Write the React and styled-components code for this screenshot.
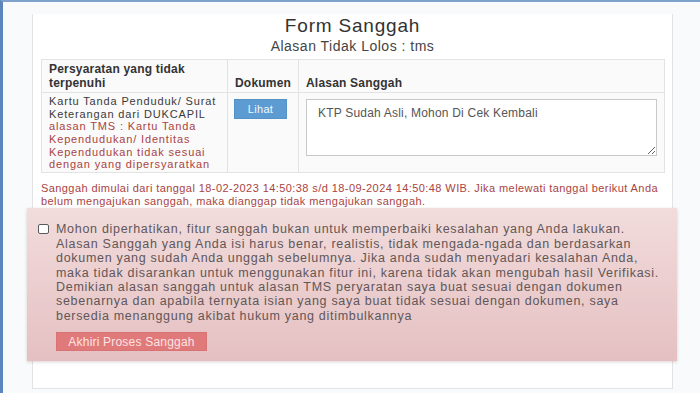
import React from "react";
import styled, { createGlobalStyle } from "styled-components";

const GlobalStyle = createGlobalStyle`
  html, body {
    margin: 0;
    padding: 0;
    background: #f9fafb;
  }
  body {
    font-family: "Liberation Sans", Arial, sans-serif;
    color: #333;
  }
`;

const statement = [
  "Mohon diperhatikan, fitur sanggah bukan untuk memperbaiki kesalahan yang Anda lakukan.",
  "Alasan Sanggah yang Anda isi harus benar, realistis, tidak mengada-ngada dan berdasarkan",
  "dokumen yang sudah Anda unggah sebelumnya. Jika anda sudah menyadari kesalahan Anda,",
  "maka tidak disarankan untuk menggunakan fitur ini, karena tidak akan mengubah hasil Verifikasi.",
  "Demikian alasan sanggah untuk alasan TMS peryaratan saya buat sesuai dengan dokumen",
  "sebenarnya dan apabila ternyata isian yang saya buat tidak sesuai dengan dokumen, saya",
  "bersedia menanggung akibat hukum yang ditimbulkannya",
];

const Frame = styled.div`
  box-sizing: border-box;
  height: 393px;
  overflow: hidden;
  border-top: 2px solid #7ea2cc;
  border-left: 3px solid #5a86bd;
  background: #f9fafb;
  padding-left: 29px;
`;

const Panel = styled.div`
  box-sizing: border-box;
  width: 641px;
  background: #fff;
  border: 1px solid #e3e3e3;
  border-top: none;
  padding: 0 8px 27px;
`;

const Title = styled.h3`
  margin: 12px 0 0;
  font-size: 19px;
  line-height: 24px;
  letter-spacing: 0.8px;
  font-weight: normal;
  text-align: center;
  color: #333;
`;

const Subtitle = styled.div`
  font-size: 14px;
  line-height: 16.2px;
  letter-spacing: 0.5px;
  text-align: center;
  color: #444;
`;

const Table = styled.table`
  margin-top: 5px;
  width: 623px;
  table-layout: fixed;
  border-collapse: collapse;
  background: #fafafa;
  border: 1px solid #e3e3e3;
`;

const Th = styled.th`
  padding: 3px 7px 1px;
  font-size: 12px;
  line-height: 13.8px;
  letter-spacing: 0.2px;
  font-weight: bold;
  text-align: left;
  vertical-align: bottom;
  color: #333;
  border: 1px solid #e3e3e3;
`;

const Td = styled.td`
  padding: 2px 7px 1px;
  vertical-align: top;
  border: 1px solid #e3e3e3;
`;

const Req = styled.div`
  font-size: 11px;
  line-height: 12.7px;
  letter-spacing: 0.85px;
  color: ${(p) => (p.$danger ? "#a94442" : "#3a3a3a")};
`;

const ViewButton = styled.button`
  box-sizing: border-box;
  width: 53px;
  height: 20px;
  margin: 4px 0 0 -1px;
  border: 1px solid #5593c7;
  background: #5c9cd2;
  color: #f4f8fc;
  font-family: inherit;
  font-size: 11px;
  letter-spacing: 0.3px;
  padding: 0;
`;

const Reason = styled.textarea`
  display: block;
  box-sizing: border-box;
  width: 100%;
  height: 57px;
  margin: 4px 0 0;
  padding: 6px 11px;
  border: 1px solid #c9c9c9;
  background: #fff;
  font-family: "Liberation Sans", Arial, sans-serif;
  font-size: 12px;
  line-height: 14px;
  letter-spacing: 0.2px;
  color: #555;
`;

const Notice = styled.p`
  margin: 9px 0 0;
  font-size: 11px;
  line-height: 12.7px;
  letter-spacing: 0.42px;
  color: #a94442;
`;

const Confirm = styled.div`
  margin: 1px -13px 0 -14px;
  padding: 14px 10px 10px 11px;
  background: linear-gradient(to bottom, #f2dcdc 0%, #e5c0c2 100%);
  box-shadow: 0 1px 3px rgba(120, 80, 80, 0.25);
`;

const CheckRow = styled.label`
  display: flex;
  align-items: flex-start;
  gap: 7px;
`;

const Box = styled.input.attrs({ type: "checkbox" })`
  appearance: none;
  box-sizing: border-box;
  flex: none;
  width: 11px;
  height: 10px;
  margin: 2px 0 0;
  border: 1px solid #5a5a5a;
  border-radius: 2px;
  background: #fff;
`;

const Statement = styled.div`
  font-size: 12.5px;
  line-height: 14.4px;
  letter-spacing: 0.7px;
  color: #615758;
`;

const Line = styled.span`
  display: block;
  white-space: nowrap;
`;

const FinishButton = styled.button`
  box-sizing: border-box;
  display: block;
  margin: 9px 0 0 18px;
  width: 151px;
  height: 19px;
  padding: 0;
  border: 1px solid #d97272;
  background: #e07a7a;
  color: #fbe3e3;
  font-family: inherit;
  font-size: 12px;
  letter-spacing: 0.2px;
`;

export default function App() {
  return (
    <>
      <GlobalStyle />
      <Frame>
        <Panel>
          <Title>Form Sanggah</Title>
          <Subtitle>Alasan Tidak Lolos : tms</Subtitle>
          <Table>
            <colgroup>
              <col style={{ width: 186 }} />
              <col style={{ width: 71 }} />
              <col style={{ width: 366 }} />
            </colgroup>
            <thead>
              <tr>
                <Th>Persyaratan yang tidak terpenuhi</Th>
                <Th>Dokumen</Th>
                <Th>Alasan Sanggah</Th>
              </tr>
            </thead>
            <tbody>
              <tr>
                <Td>
                  <Req>Kartu Tanda Penduduk/ Surat Keterangan dari DUKCAPIL</Req>
                  <Req $danger>
                    alasan TMS : Kartu Tanda Kependudukan/ Identitas
                    Kependudukan tidak sesuai dengan yang dipersyaratkan
                  </Req>
                </Td>
                <Td>
                  <ViewButton>Lihat</ViewButton>
                </Td>
                <Td>
                  <Reason defaultValue="KTP Sudah Asli, Mohon Di Cek Kembali" />
                </Td>
              </tr>
            </tbody>
          </Table>
          <Notice>
            Sanggah dimulai dari tanggal 18-02-2023 14:50:38 s/d 18-09-2024
            14:50:48 WIB. Jika melewati tanggal berikut Anda belum mengajukan
            sanggah, maka dianggap tidak mengajukan sanggah.
          </Notice>
          <Confirm>
            <CheckRow>
              <Box />
              <Statement>
                {statement.map((line) => (
                  <Line key={line}>{line}</Line>
                ))}
              </Statement>
            </CheckRow>
            <FinishButton>Akhiri Proses Sanggah</FinishButton>
          </Confirm>
        </Panel>
      </Frame>
    </>
  );
}
